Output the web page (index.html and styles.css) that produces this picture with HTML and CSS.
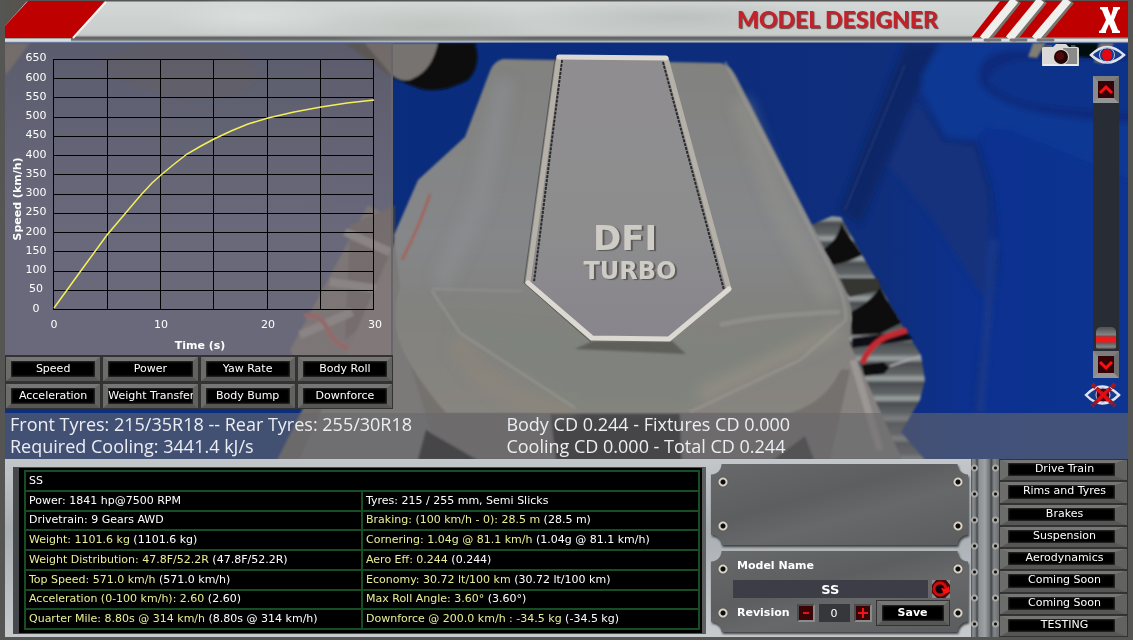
FILE: index.html
```html
<!DOCTYPE html>
<html lang="en">
<head>
<meta charset="utf-8">
<title>Model Designer</title>
<meta name="viewport" content="width=device-width, initial-scale=1">
<link rel="stylesheet" href="styles.css">
</head>
<body>
<svg class="scene" viewBox="0 0 1133 640" preserveAspectRatio="xMidYMid slice" role="img" aria-label="Engine bay with DFI Turbo cover">
  <defs>
    <linearGradient id="paint" x1="0" x2="1" y1="0" y2="0"><stop offset="0" stop-color="#0c2f82"/><stop offset=".4" stop-color="#0a2c7c"/><stop offset=".78" stop-color="#0f2e7c"/><stop offset=".86" stop-color="#0c3190"/><stop offset="1" stop-color="#0c3490"/></linearGradient>
    <linearGradient id="cover" x1="0" x2="0" y1="0" y2="1"><stop offset="0" stop-color="#82827f"/><stop offset=".5" stop-color="#86878a"/><stop offset=".7" stop-color="#82827f"/><stop offset="1" stop-color="#888580"/></linearGradient>
    <linearGradient id="plaque" x1="0" x2="0" y1="0" y2="1"><stop offset="0" stop-color="#908d90"/><stop offset=".6" stop-color="#8d8d8e"/><stop offset="1" stop-color="#88858c"/></linearGradient>
    <linearGradient id="fins" x1="0" x2="0" y1="0" y2="20" gradientUnits="userSpaceOnUse" spreadMethod="repeat"><stop offset="0" stop-color="#8e9494"/><stop offset=".15" stop-color="#4a4d50"/><stop offset=".7" stop-color="#62676a"/><stop offset=".9" stop-color="#9a9f9f"/><stop offset="1" stop-color="#8e9494"/></linearGradient>
    <filter id="soft"><feGaussianBlur stdDeviation="1"/></filter>
    <filter id="paint-soft"><feGaussianBlur stdDeviation="3"/></filter>
    <filter id="softer" x="-20%" y="-20%" width="140%" height="140%"><feGaussianBlur stdDeviation="6"/></filter>
  </defs>
  <rect width="1133" height="640" fill="url(#paint)"/>
  <g filter="url(#paint-soft)">
    <path d="M905 43 L870 130 L840 210 L860 225 L905 120 L922 85 L945 43Z" fill="#0a2768"/>
    <path d="M917 102 L888 165 L930 215 L985 300 L990 200 L978 145 L945 142Z" fill="#13307b"/>
    <path d="M940 43 L922 75 L921 97 L944 137 L973 140 L985 128 L1010 130 L1133 180 V43Z" fill="#0f3794"/>
    <path d="M920 95 L944 139 L976 143 L990 190 L997 260 L982 360 L977 413" fill="none" stroke="#0b2a76" stroke-width="5"/>
    <path d="M994 240 L980 413" fill="none" stroke="#1d3b88" stroke-width="6"/>
    <path d="M1133 50 H1010 C982 52 974 70 981 86 C1003 108 1040 118 1133 123Z" fill="#0b2c7c"/>
    <path d="M1133 60 H1020 C998 65 985 74 990 84 C1016 105 1050 108 1133 112Z" fill="#0d328a"/>
  </g>
  <g filter="url(#soft)">
    <path d="M905 65 L845 210" stroke="#293f76" stroke-width="2" opacity=".6"/>
    <path d="M1033 43 L1028 57 L1037 58 L1046 43Z" fill="#807d75"/>
    <path d="M1058 43 H1098 V58 L1080 57Z" fill="#05070c"/>
    <path d="M1100 43 L1094 62 L1103 64 L1114 43Z" fill="#777368"/>
  </g>
  <g filter="url(#soft)">
    <path d="M0 43 H30 L6 75Z" fill="#807c72"/>
    <path d="M150 43 H215 Q250 50 258 80 Q230 108 170 95 Q110 80 100 60Z" fill="#172d63"/>
    <path d="M345 43 H475 Q482 65 468 80 Q440 95 418 88 L393 78Z" fill="#080a0d"/>
    <path d="M365 43 H438 Q432 70 414 78 Q405 84 393 76Z" fill="#77736f"/>
    <path d="M368 205 L395 220 V320 L365 470 H272 L312 390 L290 350Z" fill="#706d6b"/>
    <path d="M350 225 L395 205 V300 L345 340Z" fill="#45413e"/>
    <path d="M345 232 L390 252 M330 282 L385 290 M300 335 L352 312" stroke="#b4b3af" stroke-width="8"/>
    <path d="M304 316 Q320 312 328 330 Q338 348 350 348" fill="none" stroke="#d72d2f" stroke-width="5"/>
    <path d="M370 300 L400 230 L460 350 V470 H295Z" fill="#7c7979"/>
  </g>
  <g filter="url(#soft)">
    <path d="M811 225 L832 216 L841 217 L861 253 L902 325 L921 355 L925 380 L920 400 L901 432 L925 460 H830Z" fill="url(#fins)"/>
    <path d="M822 250 Q838 240 841 224 L862 255 Q850 262 833 265Z" fill="#0a0a0c"/>
    <path d="M835 278 L878 278 L882 290 L850 297Z" fill="#353432"/>
    <path d="M850 312 Q867 305 880 288 L901 323 L880 334 L852 335Z" fill="#08080b"/>
    <path d="M852 338 Q885 334 905 330 L913 340 L852 348Z" fill="#101013"/>
    <path d="M862 363 Q872 342 888 336 L907 330" fill="none" stroke="#c22a31" stroke-width="6"/>
    <path d="M862 365 L884 362 L889 368 L884 374 L864 376Z" fill="#08080a"/>
    <path d="M890 366 L921 356" stroke="#a9a7ad" stroke-width="2"/>
    <path d="M848 340 L902 460 H790 L830 390Z" fill="#86827f"/>
    <path d="M853 360 L880 450" stroke="#9b9794" stroke-width="7"/>
    <path d="M400 330 L440 460 H830 L850 370Z" fill="#75716e"/>
    <path d="M550 413 H680 L682 462 H556Z" fill="#161515"/>
    <path d="M426 430 L478 460 H418Z" fill="#141414"/>
    <path d="M770 462 L805 436 L815 462Z" fill="#353434"/>
  </g>
  <path d="M490 71 Q494 61 503 59 L721 63 Q731 66 736 76 L830 260 Q853 300 852 318 L848 350 Q835 400 790 413 H446 Q409 370 398 338 Q392 310 400 288 L394 235 L418 180 L465 137Z" fill="url(#cover)" filter="url(#soft)"/>
  <g filter="url(#softer)" fill="none">
    <path d="M505 80 L480 200 L440 285" stroke="#8d9293" stroke-width="20" opacity=".5"/>
    <path d="M740 100 L780 210 L830 300" stroke="#96958e" stroke-width="20" opacity=".4"/>
    <path d="M550 330 L725 340 L830 320 L680 410 H570 L450 320Z" fill="#7e837c" opacity=".7"/>
    <path d="M455 340 Q490 405 575 412" stroke="#8d877c" stroke-width="18" opacity=".6"/>
    <path d="M700 395 L840 330" stroke="#9c958a" stroke-width="14" opacity=".5"/>
  </g>
  <g fill="none" filter="url(#soft)">
    <path d="M432 289 L522 291" stroke="#a1a39e" stroke-width="2" opacity=".4"/>
    <path d="M432 291 L460 333 L575 408" stroke="#9b9c93" stroke-width="3" opacity=".5"/>
    <path d="M725 62 L836 280 Q846 300 846 320 L800 360 L690 412" stroke="#a09e96" stroke-width="3" opacity=".5"/>
    <path d="M720 325 Q760 315 840 312" stroke="#aaaba7" stroke-width="5" opacity=".3"/>
    <path d="M430 194 Q420 225 402 260" stroke="#ad5a4f" stroke-width="2"/>
  </g>
  <path d="M575 349 L593 341 H672 L686 354Z" fill="#5e5e5a" filter="url(#soft)"/>
  <path d="M559 56 L666 58 L729 289 L669 339 L592 338 L528 283Z" fill="url(#plaque)"/>
  <path d="M562 60 L534 282 M663 62 L724 290" stroke="#2b2a2b" stroke-width="2" stroke-dasharray="3 1" fill="none"/>
  <path d="M559 56 L528 283 M666 58 L729 289" fill="none" stroke="#b5b1a8" stroke-width="5"/>
  <path d="M559 57 L666 58 M528 283 L592 338 L669 339 L729 289" fill="none" stroke="#dcd9d3" stroke-width="5" stroke-linecap="round" stroke-linejoin="round"/>
  <path d="M555 58 L524 283 L591 342" fill="none" stroke="#4b4946" opacity=".7"/>
  <g class="badge" text-anchor="middle">
    <text x="625" y="250" font-size="34">DFI</text>
    <text x="630" y="279" font-size="24">TURBO</text>
  </g>
</svg>

<main class="app">
  <header class="titlebar">
    <svg class="slash" viewBox="0 0 104 43" aria-hidden="true">
      <path d="M0 0 H23 L0 26Z" fill="#55544f"/>
      <path d="M23 1 H100 L67 38 H0 V26Z" fill="#bf0000"/>
      <path d="M101 2 L68 38" stroke="#f1f1ee" stroke-width="2"/>
      <path d="M0 40 H66" stroke="#dcdcda" stroke-width="3"/>
    </svg>
    <h1>MODEL DESIGNER</h1>
    <svg class="stripes" viewBox="0 0 156 43" aria-hidden="true">
      <path d="M28 1 H156 V37 H0Z" fill="#bf0000"/>
      <g stroke-width="10"><path d="M45 0 L13 40 M71 0 L39 40 M98 0 L65 40" stroke="#77736e"/></g>
      <g stroke-width="8"><path d="M43 0 L11 39 M69 0 L37 39 M96 0 L63 39" stroke="#efefec"/></g>
      <path d="M0 40 H156" stroke="#dedede" stroke-width="3"/>
      <path d="M13 40 H28 M39 40 H54 M66 40 H81" stroke="#777" stroke-width="3" stroke-linecap="round"/>
    </svg>
    <button class="close" type="button" aria-label="Close">
      <svg viewBox="0 0 22 28" aria-hidden="true"><path d="M1 1 H9 V3 L12 10 L14 3 V1 H21 V3 L19 4 L15 14 L19 24 L21 25 V27 H13 V25 L10 18 L7 25 V27 H0 V25 L2 24 L7 14 L3 4 L1 3Z" fill="#fff"/></svg>
    </button>
  </header>

  <section class="viewport">
    <div class="telemetry">
      <svg class="chart" viewBox="5 43 388 312" role="img" aria-label="Speed in km/h against time in seconds">
        <path class="grid" d="M53.500 59V310M107.500 59V310M160.500 59V310M213.500 59V310M267.500 59V310M320.500 59V310M373.500 59V310M53 59.500H374M53 78.500H374M53 97.500H374M53 117.500H374M53 136.500H374M53 155.500H374M53 174.500H374M53 194.500H374M53 213.500H374M53 232.500H374M53 251.500H374M53 271.500H374M53 290.500H374M53 309.500H374"/>
        <path class="curve" d="M54 308 L80 272 L107 235 L129 209 L140 196 L152 183 L161 175 L173 165 L187 154 L201 146 L214 139 L231 131 L248 124 L268 118 L294 112 L321 107 L347 103 L374 100"/>
        <g class="ticks">
          <text x="36" y="61">650</text><text x="36" y="81">600</text><text x="36" y="100">550</text><text x="36" y="119">500</text><text x="36" y="138">450</text><text x="36" y="158">400</text><text x="36" y="177">350</text><text x="36" y="196">300</text><text x="36" y="215">250</text><text x="36" y="235">200</text><text x="36" y="254">150</text><text x="36" y="273">100</text><text x="36" y="292">50</text><text x="36" y="312">0</text>
          <text x="54" y="328">0</text><text x="161" y="328">10</text><text x="268" y="328">20</text><text x="375" y="328">30</text>
          <text class="axis" x="200" y="349">Time (s)</text>
          <text class="axis" transform="translate(21 199) rotate(-90)">Speed (km/h)</text>
        </g>
      </svg>
      <nav class="graph-buttons" aria-label="Graphs">
        <button class="metal" type="button">Speed</button>
        <button class="metal" type="button">Power</button>
        <button class="metal" type="button">Yaw Rate</button>
        <button class="metal" type="button">Body Roll</button>
        <button class="metal" type="button">Acceleration</button>
        <button class="metal" type="button">Weight Transfer</button>
        <button class="metal" type="button">Body Bump</button>
        <button class="metal" type="button">Downforce</button>
      </nav>
    </div>

    <div class="view-tools">
      <div class="view-icons">
        <button class="icon" type="button" aria-label="Take snapshot">
          <svg width="37" height="22" viewBox="0 0 37 22"><path d="M0 4 Q0 3 2 3 H11 L14 0 H24 L27 3 H35 Q37 3 37 5 V22 H0Z" fill="#d9d9d7"/><path d="M1 3 L5 1 H10 V3 M29 3 V1 H33 L34 3" fill="#555"/><path d="M21 4 H35 V20 H23Z" fill="#8a8a88"/><path d="M1 21 H36" stroke="#fff"/><circle cx="19" cy="13" r="8" fill="#d9d9d4"/><circle cx="19" cy="13" r="7" fill="#200406"/><circle cx="18" cy="12" r="4" fill="#52080b"/></svg>
        </button>
        <button class="icon" type="button" aria-label="Show model">
          <svg width="37" height="20" viewBox="0 0 37 20"><path d="M2 10 Q18 -6 35 10 Q18 25 2 10Z" fill="#173a8d" stroke="#dfe3ee" stroke-width="2.500"/><circle cx="18" cy="10" r="7.500" fill="none" stroke="#b8c2dc"/><ellipse cx="18" cy="10" rx="5" ry="6" fill="#e4070f"/></svg>
        </button>
      </div>
      <div class="slider">
        <button class="arrow" type="button" aria-label="Zoom in"><svg width="16" height="16" viewBox="0 0 16 16"><path d="M2 11 L8 5 L14 11" fill="none" stroke="#ff1010" stroke-width="3"/></svg></button>
        <input type="range" min="0" max="100" value="1" aria-label="Zoom">
        <button class="arrow" type="button" aria-label="Zoom out"><svg width="16" height="16" viewBox="0 0 16 16"><path d="M2 5 L8 11 L14 5" fill="none" stroke="#ff1010" stroke-width="3"/></svg></button>
      </div>
      <button class="icon hide-eye" type="button" aria-label="Hide model">
        <svg width="37" height="26" viewBox="0 0 37 26"><path d="M2 13 Q18 -4 35 13 Q18 30 2 13Z" fill="#173a8d" stroke="#dfe3ee" stroke-width="2.500"/><circle cx="19" cy="13" r="7" fill="#450914" stroke="#c4cbe0"/><path d="M8 2 L31 24 M31 2 L8 24" stroke="#9a1a28" stroke-width="4" stroke-dasharray="5 1"/><path d="M13 7 L25 19 M25 7 L13 19" stroke="#e50c13" stroke-width="3"/></svg>
      </button>
    </div>
  </section>

  <section class="info">
    <p>Front Tyres: 215/35R18 -- Rear Tyres: 255/30R18<br>Required Cooling: 3441.4 kJ/s</p>
    <p>Body CD 0.244 - Fixtures CD 0.000<br>Cooling CD 0.000 - Total CD 0.244</p>
  </section>

  <section class="dashboard">
    <div class="screen">
      <table>
        <tbody>
          <tr><td colspan="2">SS</td></tr>
          <tr><td>Power: 1841 hp@7500 RPM</td><td>Tyres: 215 / 255 mm, Semi Slicks</td></tr>
          <tr><td>Drivetrain: 9 Gears AWD</td><td><b>Braking: (100 km/h - 0): 28.5 m</b> (28.5 m)</td></tr>
          <tr><td><b>Weight: 1101.6 kg</b> (1101.6 kg)</td><td><b>Cornering: 1.04g @ 81.1 km/h</b> (1.04g @ 81.1 km/h)</td></tr>
          <tr><td><b>Weight Distribution: 47.8F/52.2R</b> (47.8F/52.2R)</td><td><b>Aero Eff: 0.244</b> (0.244)</td></tr>
          <tr><td><b>Top Speed: 571.0 km/h</b> (571.0 km/h)</td><td><b>Economy: 30.72 lt/100 km</b> (30.72 lt/100 km)</td></tr>
          <tr><td><b>Acceleration (0-100 km/h): 2.60</b> (2.60)</td><td><b>Max Roll Angle: 3.60°</b> (3.60°)</td></tr>
          <tr><td><b>Quarter Mile: 8.80s @ 314 km/h</b> (8.80s @ 314 km/h)</td><td><b>Downforce @ 200.0 km/h : -34.5 kg</b> (-34.5 kg)</td></tr>
        </tbody>
      </table>
    </div>

    <div class="plates">
      <div class="plate"></div>
      <form class="plate model-form">
        <label for="model-name">Model Name</label>
        <div class="form-row">
          <input id="model-name" class="name" type="text" value="SS">
          <button class="mini" type="button" aria-label="Reset name"><svg width="18" height="18" viewBox="0 0 18 18"><path d="M0 0 H4 L0 5Z M14 0 H18 V5Z M0 13 L5 18 H0Z M18 13 V18 H13Z" fill="#8a8a8a"/><circle cx="8" cy="9" r="6" fill="#100305" stroke="#d00c0c" stroke-width="3"/><path d="M9 8 L14 9 L17 6 L18 12 L12 14Z" fill="#ff1010"/></svg></button>
        </div>
        <div class="form-row">
          <label for="revision">Revision</label>
          <button class="mini bevel" type="button" aria-label="Previous revision"><svg width="14" height="14" viewBox="0 0 14 14"><path d="M4 7 H10" stroke="#e81212" stroke-width="2"/></svg></button>
          <input id="revision" class="revision" type="text" value="0">
          <button class="mini bevel" type="button" aria-label="Next revision"><svg width="14" height="14" viewBox="0 0 14 14"><path d="M2 7 H12 M7 2 V12" stroke="#f01414" stroke-width="2"/></svg></button>
          <button class="metal save" type="button">Save</button>
        </div>
      </form>
    </div>

    <div class="rail"><i></i><i></i></div>

    <nav class="menu" aria-label="Sections">
      <button class="metal" type="button">Drive Train</button>
      <button class="metal" type="button">Rims and Tyres</button>
      <button class="metal" type="button">Brakes</button>
      <button class="metal" type="button">Suspension</button>
      <button class="metal" type="button">Aerodynamics</button>
      <button class="metal" type="button">Coming Soon</button>
      <button class="metal" type="button">Coming Soon</button>
      <button class="metal" type="button">TESTING</button>
    </nav>
  </section>
</main>
</body>
</html>
```
FILE: styles.css
```css
* { box-sizing: border-box; }

body {
  margin: 0;
  background: #555553;
  color: #fff;
  font: 11px/14px "DejaVu Sans", sans-serif;
}

button, input { font: inherit; color: inherit; margin: 0; }
button { border: 0; padding: 0; cursor: pointer; }
svg { display: block; }

.scene { position: absolute; inset: 0; width: 100%; height: 100%; z-index: -1; }
.badge { font-family: "DejaVu Sans", sans-serif; font-weight: bold; fill: #cfccc6; text-shadow: 2px 1px 1px #5b5957; }

.app {
  display: flex;
  flex-direction: column;
  min-height: 100vh;
  border: solid #555553;
  border-width: 0 5px 3px 5px;
}

/* Title bar */
.titlebar {
  display: flex;
  height: 43px;
  position: relative;
  background:
    radial-gradient(ellipse 160px 20px at 60% 40%, #aab0ae80, transparent),
    radial-gradient(ellipse 120px 24px at 38% 60%, #b2b5ae70, transparent),
    radial-gradient(ellipse 90px 20px at 22% 40%, #e4e8e780, transparent),
    linear-gradient(#555 0 1px, #d3d7d6 2px, #c9cecd 34px, #b5b8b8 36px, #666 37px 39px, #777c82 40px, #c4c8cc 42px, #0a2b72 43px);
}
.slash { width: 104px; height: 43px; }
.titlebar h1 {
  margin: 0 34px 0 auto;
  font: 900 23px/38px Lato, sans-serif;
  color: #c4222a;
  text-shadow: 1px 1px 1px #6b4a4a;
}
.stripes { width: 156px; height: 43px; }
.close { position: absolute; right: 7px; top: 6px; width: 22px; height: 28px; background: none; }

/* 3D view */
.viewport { flex: 1; display: flex; justify-content: space-between; align-items: flex-start; padding-bottom: 4px; }
.telemetry { width: 388px; }
.chart { width: 100%; background: linear-gradient(#6f6867cc, #81787acc 60%, #81787acc); box-shadow: inset -2px 0 #66666b; }
.grid { stroke: #000; fill: none; }
.curve { stroke: #f5f05a; fill: none; stroke-width: 1.500; }
.ticks { fill: #fff; font-size: 11px; text-anchor: middle; }
.axis { font-weight: bold; }
.graph-buttons { display: grid; grid-template-columns: repeat(4, 1fr); gap: 1px; padding-top: 1px; background: #343434; }

.metal {
  height: 26px;
  padding: 0;
  border: 5px solid;
  border-width: 5px 6px;
  border-color: #767674 #626261 #565655 #6c6c6a;
  background: #000;
  box-shadow: inset 0 0 2px 1px #2c2c2c;
  outline: 1px solid #333;
  outline-offset: -1px;
  white-space: nowrap;
  overflow: hidden;
  line-height: 12px;
}

.view-tools { display: flex; flex-direction: column; align-items: flex-end; }
.view-icons { display: flex; gap: 10px; align-items: center; padding: 1px 2px 10px 0; }
.icon { background: none; }
.slider { display: flex; flex-direction: column; width: 26px; margin-right: 9px; background: #282d35; }
.arrow {
  display: grid;
  place-items: center;
  width: 26px;
  height: 27px;
  border: 5px solid;
  border-color: #7d7d7d #6d6d6d #959595 #8b8b8b;
  background: #350305;
}
.slider input {
  appearance: none;
  writing-mode: vertical-lr;
  direction: rtl;
  width: 26px;
  height: 248px;
  background: none;
}
.slider input::-webkit-slider-thumb {
  appearance: none;
  width: 20px;
  height: 22px;
  border-radius: 5px 5px 2px 2px;
  background: linear-gradient(#555 0 1px, #858585 8px, #5b5b5b 9px, #f01818 10px 15px, #5d5d5d 16px, #858585 20px, #444);
}
.hide-eye { margin: 4px 7px 0 0; }

/* Info strip */
.info {
  display: flex;
  height: 46px;
  padding: 0 5px;
  background: #68686a99;
  font: 18px/22px "Open Sans", sans-serif;
  color: #eceef2;
}
.info p { margin: 0; flex: 1; white-space: nowrap; }
.info p:first-child { flex: 0 0 44.6%; }

/* Dashboard */
.dashboard { display: flex; height: 178px; background: linear-gradient(#c3c7ca, #aaafb3 40%, #c7cbce); }
.screen { flex: 1; margin: 8px 5px 3px 8px; padding: 2px 2px 2px 5px; background: #000; border: 1px solid #4b4e52; border-left: 6px solid #46484b; border-right: 4px solid #5c5e60; }
table { width: 100%; height: 160px; border: 2px solid #1f7a33; border-collapse: collapse; table-layout: fixed; }
td { border: 2px solid #174d22; padding: 0 3px; line-height: 14px; white-space: nowrap; }
td b { font-weight: normal; color: #e9ee94; }

.plates { display: grid; grid-template-rows: 1fr 1fr; gap: 6px; width: 256px; margin: 5px 4px 5px 0; filter: drop-shadow(1px 2px 1px #3c3f42); }
.plate {
  --screw: radial-gradient(circle, #0c0c0c 0 2px, #d6d2c8 3px 4px, #5f5c57 5px, transparent 6px);
  background: var(--screw), var(--screw), var(--screw), var(--screw), linear-gradient(165deg, #68696a, #5d5e5f 40%, #676869 60%, #5b5c5d);
  background-size: 12px 12px, 12px 12px, 12px 12px, 12px 12px, auto;
  background-position: 6px 12px, calc(100% - 4px) 12px, 6px calc(100% - 13px), calc(100% - 4px) calc(100% - 13px), 0 0;
  background-repeat: no-repeat;
  -webkit-mask:
    radial-gradient(circle at 0 0, transparent 10px, #000 11px) 0 0 / 51% 51% no-repeat,
    radial-gradient(circle at 100% 0, transparent 10px, #000 11px) 100% 0 / 51% 51% no-repeat,
    radial-gradient(circle at 0 100%, transparent 10px, #000 11px) 0 100% / 51% 51% no-repeat,
    radial-gradient(circle at 100% 100%, transparent 10px, #000 11px) 100% 100% / 51% 51% no-repeat;
  margin-right: 3px;
}
.model-form { padding: 8px 18px 4px 22px; }
.model-form label { display: block; padding-left: 4px; font-weight: bold; }
.form-row { display: flex; align-items: center; gap: 4px; margin-top: 7px; }
.form-row + .form-row { margin-top: 2px; }
.form-row label { margin-right: 3px; }
.form-row input { border: 0; background: #3d3d47; text-align: center; min-width: 0; height: 18px; padding: 0; }
.name { flex: 1; font-size: 13px; font-weight: bold; }
.form-row .revision { width: 31px; background: #36373b; }
.mini { display: grid; place-items: center; width: 18px; height: 18px; background: #45090c; flex: none; }
.bevel { border: 2px solid; border-color: #4b4b4b #8b8b8b #8b8b8b #4b4b4b; background: #3a0507; }
.save { margin-left: auto; width: 74px; font-weight: bold; }

.rail {
  display: flex;
  justify-content: space-between;
  width: 28px;
  background: linear-gradient(90deg, #4c4e50, #8d9092 2px, #6c6f71 5px, #3f4143 6px, #8c9092 8px, #9ea2a4 14px, #6b6e70 19px, #3f4143 20px, #85888a 23px, #6a6d6f);
}
.rail i { width: 7px; background: radial-gradient(circle, #111 0 1px, #aaa9a4 2px 3px, transparent 4px) 0 -4px / 7px 26px; }

.menu { display: flex; flex-direction: column; width: 129px; background: #686a6b; }
.menu .metal { flex: 1; height: auto; min-height: 0; border-width: 4px 13px 5px 9px; padding: 0 0 2px 6px; }
```
